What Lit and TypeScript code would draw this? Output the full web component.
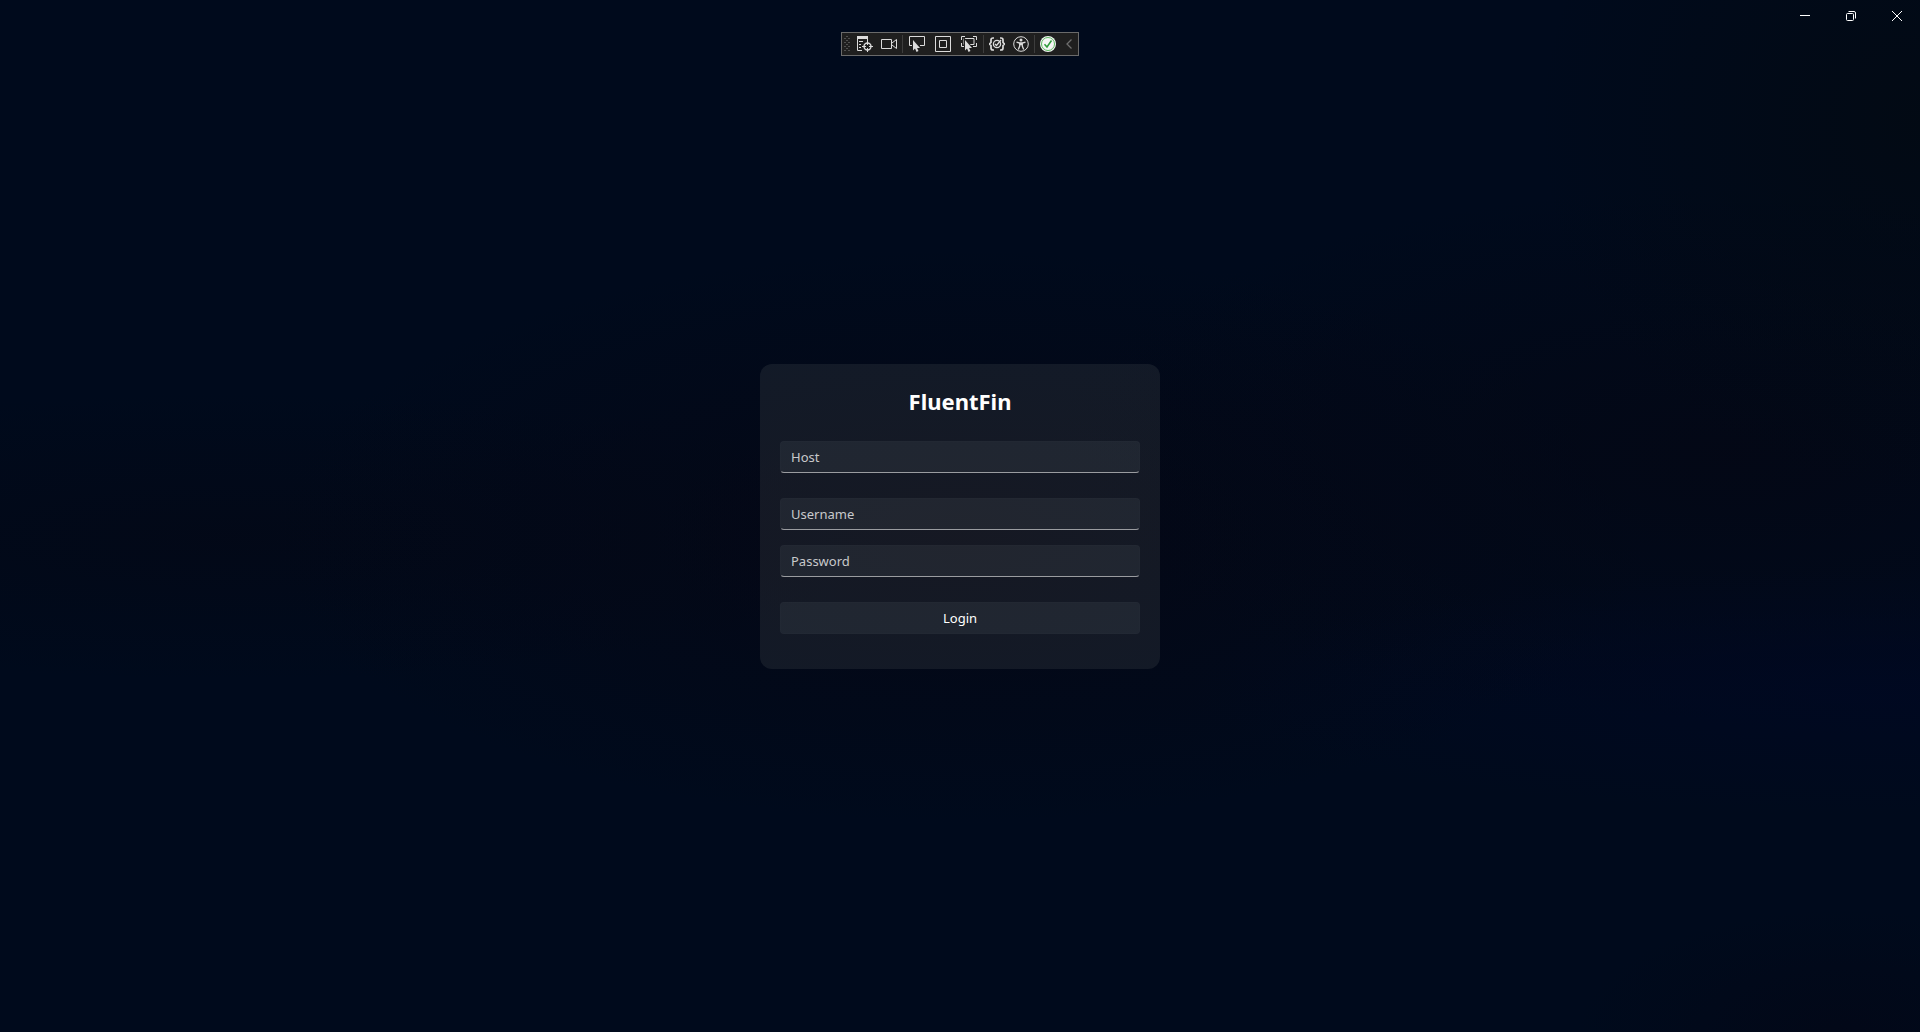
import { LitElement, html, css, svg } from "lit";
import { customElement, state } from "lit/decorators.js";

const pointer = svg`<path d="M4 4v10.500l2.500-2.500h4.500z" fill="#dcdcdc" stroke="#1f1f1f" stroke-width="2" paint-order="stroke"/><path d="M6.500 11l2 4.500" stroke="#dcdcdc" stroke-width="2" fill="none"/>`;

const icons = {
  tree: svg`
    <path d="M0 0h11v3H0z" fill="#dcdcdc"/>
    <path d="M.5 3v11.500H5M2 5.500h4M2 8.500h2M2 11.500h2M10.500 3v2" stroke="#dcdcdc" fill="none"/>
    <circle cx="10.500" cy="10.500" r="3.500" stroke="#dcdcdc" stroke-width="1.400" fill="none"/>
    <path d="M10.500 5v4M10.500 12v4M5 10.500h4M12 10.500h4" stroke="#dcdcdc" fill="none"/>`,
  video: svg`
    <path d="M.5 3.500h10v9H.5z" stroke="#dcdcdc" fill="none"/>
    <path d="M11 7l4.500-3.500v9L11 9" stroke="#dcdcdc" fill="none"/>`,
  select: svg`
    <path d="M3 9.500H.5v-9h15v9H11" stroke="#dcdcdc" fill="none"/>${pointer}`,
  layout: svg`
    <path d="M.5.500h15v15H.5zM4.500 4.500h7v7h-7z" stroke="#dcdcdc" fill="none"/>`,
  region: svg`
    <path d="M.5 4V.500H4M12 .500h3.500V4M.5 7v3.500H3M12 10.500h3.500V7M3 2.500h10v6H3z" stroke="#dcdcdc" fill="none"/>${pointer}`,
  reload: svg`
    <path d="M5 2H4Q2 2 2 4v2.500L.5 8 2 9.500V12q0 2 2 2h1M11 2h1q2 0 2 2v2.500L15.500 8 14 9.500V12q0 2-2 2h-1" stroke="#dcdcdc" stroke-width="1.700" fill="none"/>
    <circle cx="8" cy="8" r="3.600" stroke="#dcdcdc" stroke-width="1.300" fill="none"/>
    <path d="M6 8l1.500 1.500L12 4" stroke="#dcdcdc" stroke-width="1.300" fill="none"/>`,
  access: svg`
    <circle cx="8" cy="8" r="7.300" stroke="#dcdcdc" fill="none"/>
    <circle cx="8" cy="4" r="1.500" fill="#dcdcdc"/>
    <path d="M3.500 6.200l3 .800h3l3-.800M6.700 7v3L5.300 13.500M9.300 7v3l1.400 3.500M6.500 8.500h3" stroke="#dcdcdc" stroke-width="1.300" fill="none"/>`,
  ok: svg`
    <circle cx="8" cy="8" r="8" fill="#f0f4f0"/>
    <circle cx="8" cy="8" r="6.500" fill="#f6f6f6" stroke="#5cb860"/>
    <path d="M4.500 8.200l2.500 2.800 4.500-6.500" stroke="#2e9b3a" stroke-width="1.500" fill="none"/>`,
  chevron: svg`<path d="M10.500 3.500L6 8l4.500 4.500" stroke="#6e6e6e" stroke-width="1.300" fill="none"/>`,
  minimize: svg`<path d="M3 7.500h10" stroke="#fff" fill="none"/>`,
  restore: svg`
    <rect x="3.500" y="5.500" width="7" height="7" rx="1" stroke="#fff" fill="none"/>
    <path d="M5.500 3.500H11q1.500 0 1.500 1.500v5.500" stroke="#fff" fill="none"/>`,
  close: svg`<path d="M3 3l10 10M13 3L3 13" stroke="#fff" fill="none"/>`,
};

type IconName = keyof typeof icons;

const icon = (name: IconName) =>
  html`<svg class="icon" viewBox="0 0 16 16" aria-hidden="true">${icons[name]}</svg>`;

interface Tool {
  icon: IconName;
  label: string;
}

const toolGroups: { wide: boolean; tools: Tool[] }[] = [
  {
    wide: false,
    tools: [
      { icon: "tree", label: "Go to Live Visual Tree" },
      { icon: "video", label: "Show in XAML Live Preview" },
    ],
  },
  {
    wide: true,
    tools: [
      { icon: "select", label: "Select Element" },
      { icon: "layout", label: "Display Layout Adorners" },
      { icon: "region", label: "Track Focused Element" },
    ],
  },
  {
    wide: false,
    tools: [
      { icon: "reload", label: "Binding Failures" },
      { icon: "access", label: "Scan for Accessibility Issues" },
    ],
  },
  { wide: false, tools: [{ icon: "ok", label: "Hot Reload" }] },
];

const controlReset = css`
  button {
    margin: 0;
    padding: 0;
    border: 0;
    background: none;
    color: inherit;
    font: inherit;
  }
  .icon {
    display: block;
    width: 16px;
    height: 16px;
  }
`;

@customElement("window-controls")
export class WindowControls extends LitElement {
  static styles = [
    controlReset,
    css`
      :host {
        display: flex;
        justify-content: flex-end;
      }
      .control {
        display: grid;
        place-items: center;
        width: 46px;
        height: 32px;
      }
      .control:hover {
        background: rgba(255, 255, 255, 0.08);
      }
    `,
  ];

  render() {
    return html`
      <button class="control" aria-label="Minimize">${icon("minimize")}</button>
      <button class="control" aria-label="Restore">${icon("restore")}</button>
      <button class="control" aria-label="Close">${icon("close")}</button>
    `;
  }
}

@customElement("debug-toolbar")
export class DebugToolbar extends LitElement {
  static styles = [
    controlReset,
    css`
      :host {
        display: flex;
        box-sizing: border-box;
        height: 24px;
        border: 1px solid #6a6a6a;
        background: #1f1f1f;
      }
      .grip {
        width: 6px;
        margin: 3px 3px 3px 2px;
        background: conic-gradient(#505050 25%, transparent 0 50%, #505050 0 75%, transparent 0) 0 0 /
          4px 4px;
        mask-image: repeating-linear-gradient(#000 0 1px, transparent 1px 2px);
      }
      .group {
        display: flex;
      }
      .group + .group::before {
        content: "";
        width: 1px;
        margin: 2px 1px;
        background: #3d3d3d;
      }
      .tool {
        display: grid;
        place-items: center;
        width: 24px;
      }
      .wide .tool {
        width: 26px;
      }
      .collapse {
        display: grid;
        place-items: center;
        width: 18px;
      }
      .tool:hover,
      .collapse:hover {
        background: #3a3a3a;
      }
    `,
  ];

  render() {
    return html`
      <span class="grip"></span>
      ${toolGroups.map(
        (group) => html`<div class="group ${group.wide ? "wide" : ""}">
          ${group.tools.map(
            (tool) =>
              html`<button class="tool" aria-label=${tool.label}>${icon(tool.icon)}</button>`
          )}
        </div>`
      )}
      <button class="collapse" aria-label="Collapse toolbar">${icon("chevron")}</button>
    `;
  }
}

@customElement("login-card")
export class LoginCard extends LitElement {
  @state() private values: Record<string, string> = { host: "", username: "", password: "" };

  static styles = css`
    :host {
      display: block;
      box-sizing: border-box;
      width: 400px;
      max-width: 100%;
      padding: 20px 20px 35px;
      border-radius: 12px;
      background: rgba(255, 250, 230, 0.07);
    }
    .form {
      display: flex;
      flex-direction: column;
      gap: 25px;
    }
    .title {
      margin: 0;
      padding-top: 2px;
      font-size: 22px;
      line-height: 30px;
      font-weight: 700;
      text-align: center;
    }
    .credentials {
      display: flex;
      flex-direction: column;
      gap: 15px;
    }
    .field,
    .submit {
      box-sizing: border-box;
      width: 100%;
      height: 32px;
      margin: 0;
      border: 1px solid rgba(255, 255, 255, 0.01);
      border-radius: 4px;
      background: rgba(245, 255, 250, 0.06);
      color: #fff;
      font: inherit;
    }
    .field {
      padding: 0 10px;
      border-bottom-color: #9a9ca0;
      outline: none;
    }
    .field::placeholder {
      color: #c8c9cb;
      opacity: 1;
    }
    .field:focus {
      background: rgba(0, 0, 0, 0.3);
    }
    .submit:hover {
      background: rgba(255, 255, 255, 0.09);
    }
  `;

  private field(name: string, label: string, type = "text") {
    return html`<input
      class="field"
      name=${name}
      type=${type}
      aria-label=${label}
      placeholder=${label}
      .value=${this.values[name]}
      @input=${(e: Event) => {
        this.values = { ...this.values, [name]: (e.target as HTMLInputElement).value };
      }}
    />`;
  }

  render() {
    return html`
      <form class="form" @submit=${(e: Event) => e.preventDefault()}>
        <h1 class="title">FluentFin</h1>
        ${this.field("host", "Host")}
        <div class="credentials">
          ${this.field("username", "Username")} ${this.field("password", "Password", "password")}
        </div>
        <button class="submit" type="submit">Login</button>
      </form>
    `;
  }
}

@customElement("app-root")
export class AppRoot extends LitElement {
  static styles = css`
    :host {
      display: grid;
      grid-template: 100% / 100%;
      height: 100vh;
      min-height: 400px;
      overflow: hidden;
      color: #fff;
      font: 13px/20px "Segoe UI", "Noto Sans", "Open Sans", sans-serif;
      background: radial-gradient(ellipse 20% 36% at 100% 12%, rgba(3, 10, 18, 0.8), transparent),
        radial-gradient(ellipse 36% 12% at 98% 67%, rgba(0, 8, 34, 0.8), transparent),
        radial-gradient(ellipse 36% 26% at 90% 44%, rgba(4, 7, 20, 0.8), transparent),
        radial-gradient(ellipse 36% 28% at 50% 52%, rgba(5, 7, 20, 0.9), transparent),
        radial-gradient(ellipse 36% 14% at 12% 52%, rgba(3, 8, 22, 0.8), transparent),
        radial-gradient(ellipse 14% 12% at 96% 100%, rgba(3, 7, 22, 0.7), transparent), #000a1c;
    }
    .stage,
    .chrome {
      grid-area: 1 / 1;
    }
    .stage {
      display: grid;
      place-items: center;
    }
    .chrome {
      z-index: 1;
      display: flex;
      flex-direction: column;
      align-self: start;
    }
    .tools {
      align-self: center;
    }
  `;

  render() {
    return html`
      <header class="chrome">
        <window-controls></window-controls>
        <debug-toolbar class="tools"></debug-toolbar>
      </header>
      <main class="stage"><login-card></login-card></main>
    `;
  }
}
